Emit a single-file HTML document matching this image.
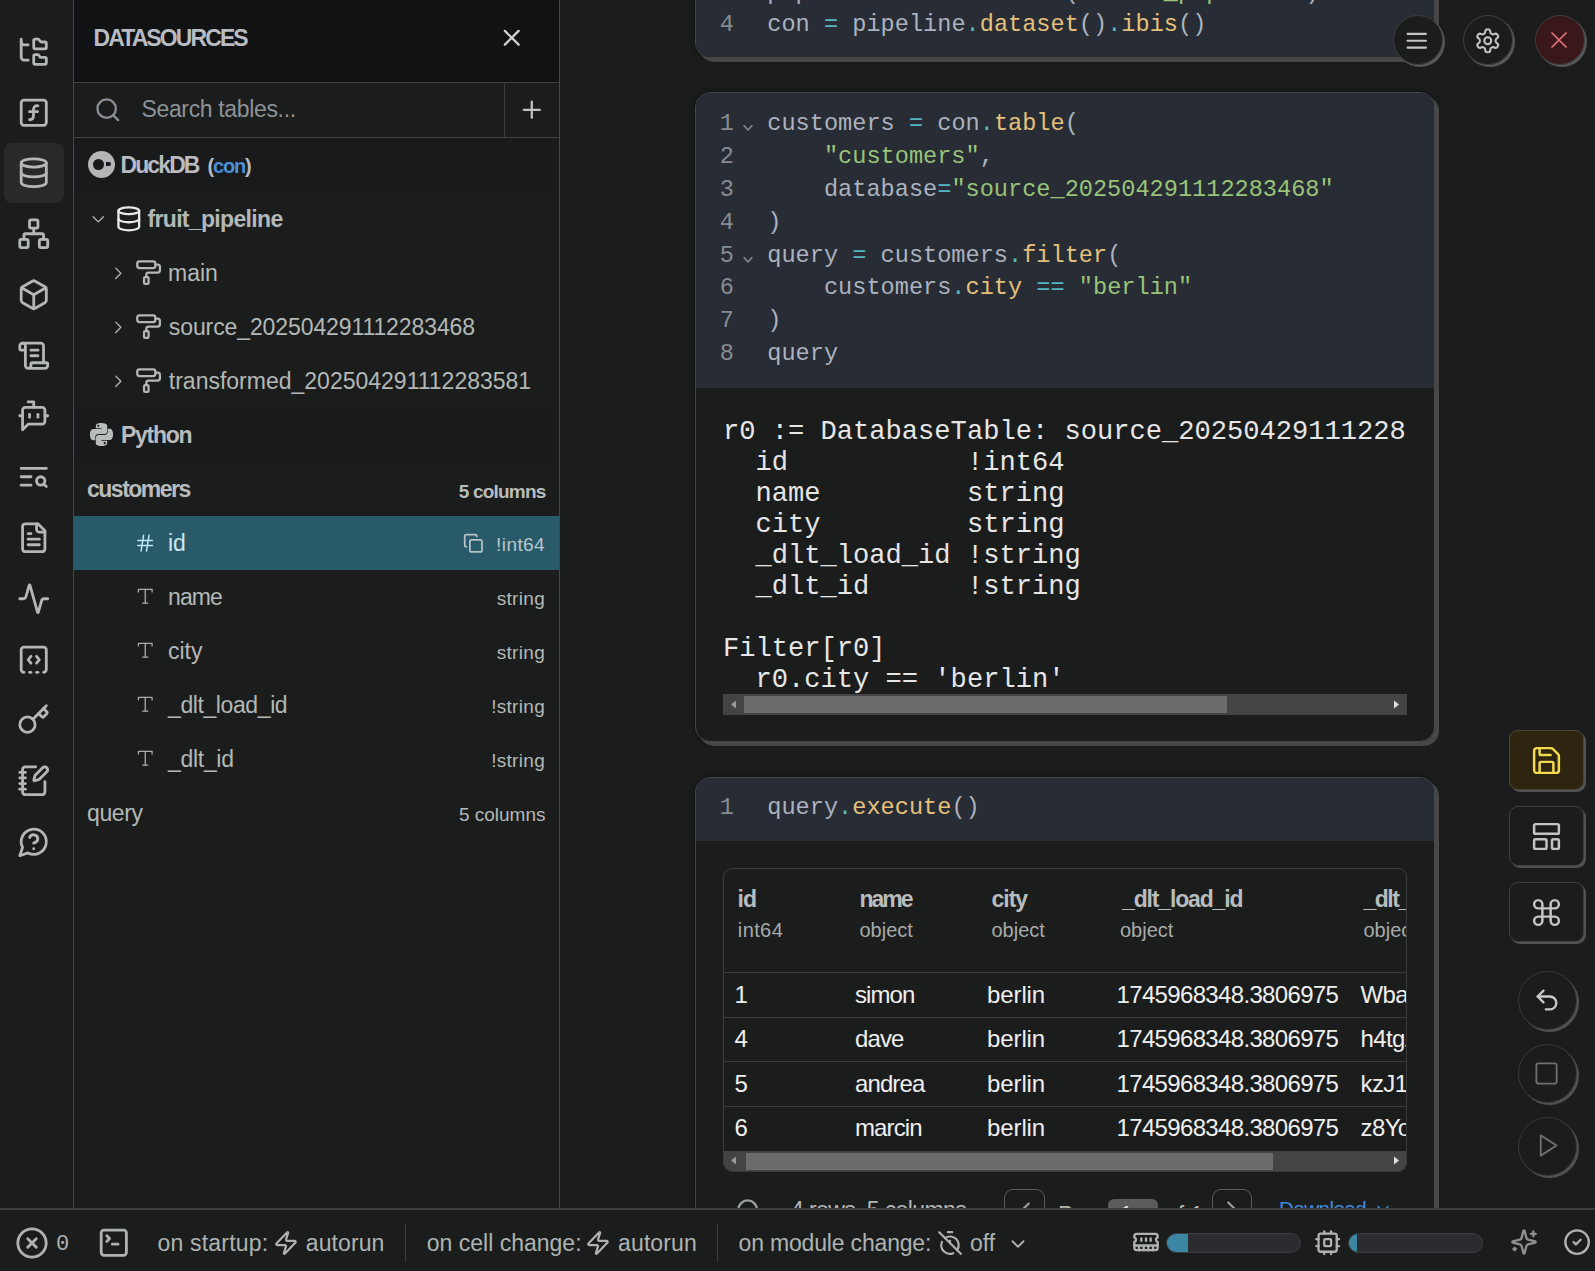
<!DOCTYPE html>
<html><head><meta charset="utf-8">
<style>
*{box-sizing:border-box;margin:0;padding:0}
html,body{width:1595px;height:1271px;overflow:hidden;background:#1b1d1d;font-family:"Liberation Sans",sans-serif;color:#b3b8b6}
.a{position:absolute}
.t{position:absolute;white-space:pre;line-height:1}
.m{font-family:"Liberation Mono",monospace}
svg.i{position:absolute;fill:none;stroke:currentColor;stroke-linecap:round;stroke-linejoin:round;overflow:visible}
.ln{color:#868b91}
.id{color:#abb2bf}
.op{color:#56b6c2}
.fn{color:#e5c07b}
.st{color:#98c379}
</style></head><body>
<div class="a" style="left:0;top:0;width:73px;height:1209px;background:#1b1d1d"></div><div class="a" style="left:73px;top:0;width:1px;height:1209px;background:#43474b"></div><div class="a" style="left:4px;top:143px;width:60px;height:60px;border-radius:8px;background:#282a2a"></div><svg class="i" style="left:17.25px;top:34.85px;width:33.5px;height:33.5px;color:#b3b8b6;stroke-width:2;" viewBox="0 0 24 24"><path d="M20 10a1 1 0 0 0 1-1V6a1 1 0 0 0-1-1h-2.5a1 1 0 0 1-.8-.4l-.9-1.2A1 1 0 0 0 15 3h-2a1 1 0 0 0-1 1v5a1 1 0 0 0 1 1Z"/><path d="M20 21a1 1 0 0 0 1-1v-3a1 1 0 0 0-1-1h-2.9a1 1 0 0 1-.88-.55l-.42-.85a1 1 0 0 0-.92-.6H13a1 1 0 0 0-1 1v5a1 1 0 0 0 1 1Z"/><path d="M3 5a2 2 0 0 0 2 2h3"/><path d="M3 3v13a2 2 0 0 0 2 2h3"/></svg><svg class="i" style="left:17.25px;top:95.62px;width:33.5px;height:33.5px;color:#b3b8b6;stroke-width:2;" viewBox="0 0 24 24"><rect width="18" height="18" x="3" y="3" rx="2"/><path d="M9 17c2 0 2.8-1 2.8-2.8V10c0-2 1-3.3 3.2-3"/><path d="M9 11.2h5.7"/></svg><svg class="i" style="left:17.25px;top:156.39px;width:33.5px;height:33.5px;color:#b3b8b6;stroke-width:2;" viewBox="0 0 24 24"><ellipse cx="12" cy="5" rx="9" ry="3"/><path d="M3 5V19A9 3 0 0 0 21 19V5"/><path d="M3 12A9 3 0 0 0 21 12"/></svg><svg class="i" style="left:17.25px;top:217.16px;width:33.5px;height:33.5px;color:#b3b8b6;stroke-width:2;" viewBox="0 0 24 24"><rect x="16" y="16" width="6" height="6" rx="1"/><rect x="2" y="16" width="6" height="6" rx="1"/><rect x="9" y="2" width="6" height="6" rx="1"/><path d="M5 16v-3a1 1 0 0 1 1-1h12a1 1 0 0 1 1 1v3"/><path d="M12 12V8"/></svg><svg class="i" style="left:17.25px;top:277.93px;width:33.5px;height:33.5px;color:#b3b8b6;stroke-width:2;" viewBox="0 0 24 24"><path d="M21 8a2 2 0 0 0-1-1.73l-7-4a2 2 0 0 0-2 0l-7 4A2 2 0 0 0 3 8v8a2 2 0 0 0 1 1.73l7 4a2 2 0 0 0 2 0l7-4A2 2 0 0 0 21 16Z"/><path d="m3.3 7 8.7 5 8.7-5"/><path d="M12 22V12"/></svg><svg class="i" style="left:17.25px;top:338.70px;width:33.5px;height:33.5px;color:#b3b8b6;stroke-width:2;" viewBox="0 0 24 24"><path d="M15 12h-5"/><path d="M15 8h-5"/><path d="M19 17V5a2 2 0 0 0-2-2H4"/><path d="M8 21h12a2 2 0 0 0 2-2v-1a1 1 0 0 0-1-1H11a1 1 0 0 0-1 1v1a2 2 0 1 1-4 0V5a2 2 0 1 0-4 0v2a1 1 0 0 0 1 1h3"/></svg><svg class="i" style="left:17.25px;top:399.47px;width:33.5px;height:33.5px;color:#b3b8b6;stroke-width:2;" viewBox="0 0 24 24"><path d="M12 6V2H8"/><path d="m8 18-4 4V8a2 2 0 0 1 2-2h12a2 2 0 0 1 2 2v8a2 2 0 0 1-2 2Z"/><path d="M2 12h2"/><path d="M9 11v2"/><path d="M15 11v2"/><path d="M20 12h2"/></svg><svg class="i" style="left:17.25px;top:460.24px;width:33.5px;height:33.5px;color:#b3b8b6;stroke-width:2;" viewBox="0 0 24 24"><path d="M21 6H3"/><path d="M10 12H3"/><path d="M10 18H3"/><circle cx="17" cy="15" r="3"/><path d="m21 19-1.9-1.9"/></svg><svg class="i" style="left:17.25px;top:521.01px;width:33.5px;height:33.5px;color:#b3b8b6;stroke-width:2;" viewBox="0 0 24 24"><path d="M15 2H6a2 2 0 0 0-2 2v16a2 2 0 0 0 2 2h12a2 2 0 0 0 2-2V7Z"/><path d="M14 2v4a2 2 0 0 0 2 2h4"/><path d="M10 9H8"/><path d="M16 13H8"/><path d="M16 17H8"/></svg><svg class="i" style="left:17.25px;top:581.78px;width:33.5px;height:33.5px;color:#b3b8b6;stroke-width:2;" viewBox="0 0 24 24"><path d="M22 12h-2.48a2 2 0 0 0-1.93 1.46l-2.35 8.36a.25.25 0 0 1-.48 0L9.24 2.18a.25.25 0 0 0-.48 0l-2.35 8.36A2 2 0 0 1 4.49 12H2"/></svg><svg class="i" style="left:17.25px;top:642.55px;width:33.5px;height:33.5px;color:#b3b8b6;stroke-width:2;" viewBox="0 0 24 24"><path d="M10 9.5 8 12l2 2.5"/><path d="M14 21h1"/><path d="m14 9.5 2 2.5-2 2.5"/><path d="M5 21a2 2 0 0 1-2-2V5a2 2 0 0 1 2-2h14a2 2 0 0 1 2 2v14a2 2 0 0 1-2 2"/><path d="M9 21h1"/></svg><svg class="i" style="left:17.25px;top:703.32px;width:33.5px;height:33.5px;color:#b3b8b6;stroke-width:2;" viewBox="0 0 24 24"><path d="m15.5 7.5 2.3 2.3a1 1 0 0 0 1.4 0l2.1-2.1a1 1 0 0 0 0-1.4L19 4"/><path d="m21 2-9.6 9.6"/><circle cx="7.5" cy="15.5" r="5.5"/></svg><svg class="i" style="left:17.25px;top:764.09px;width:33.5px;height:33.5px;color:#b3b8b6;stroke-width:2;" viewBox="0 0 24 24"><path d="M13.4 2H6a2 2 0 0 0-2 2v16a2 2 0 0 0 2 2h12a2 2 0 0 0 2-2v-7.4"/><path d="M2 6h4"/><path d="M2 10h4"/><path d="M2 14h4"/><path d="M2 18h4"/><path d="M21.378 5.626a1 1 0 1 0-3.004-3.004l-5.01 5.012a2 2 0 0 0-.506.854l-.837 2.87a.5.5 0 0 0 .62.62l2.87-.837a2 2 0 0 0 .854-.506z"/></svg><svg class="i" style="left:17.25px;top:824.86px;width:33.5px;height:33.5px;color:#b3b8b6;stroke-width:2;" viewBox="0 0 24 24"><path d="M7.9 20A9 9 0 1 0 4 16.1L2 22Z"/><path d="M9.09 9a3 3 0 0 1 5.83 1c0 2-3 3-3 3"/><path d="M12 17h.01"/></svg><div class="a" style="left:74px;top:0;width:485px;height:82px;background:#111214"></div><div class="a" style="left:74px;top:82px;width:485px;height:1px;background:#3f4241"></div><div class="a" style="left:74px;top:137px;width:485px;height:1px;background:#3f4241"></div><div class="a" style="left:504px;top:83px;width:1px;height:54px;background:#3a3d3f"></div><div class="a" style="left:74px;top:138px;width:485px;height:54px;background:#191a1c"></div><div class="a" style="left:74px;top:408px;width:485px;height:54px;background:#191a1c"></div><div class="a" style="left:74px;top:516px;width:485px;height:54px;background:#285a69"></div><div class="a" style="left:559px;top:0;width:1px;height:1209px;background:#43474b"></div><div class="t" style="top:26.63px;font-size:23px;color:#b8bcc2;font-weight:700;letter-spacing:-1.9px;left:93.50px;">DATASOURCES</div><svg class="i" style="left:497.75px;top:23.75px;width:27.5px;height:27.5px;color:#d0d2d4;stroke-width:2;" viewBox="0 0 24 24"><path d="M18 6 6 18"/><path d="m6 6 12 12"/></svg><svg class="i" style="left:93.70px;top:95.70px;width:27.6px;height:27.6px;color:#8a8f94;stroke-width:2;" viewBox="0 0 24 24"><circle cx="11" cy="11" r="8"/><path d="m21 21-4.3-4.3"/></svg><div class="t" style="top:98.43px;font-size:23px;color:#8d9297;letter-spacing:-0.35px;left:141.50px;">Search tables...</div><svg class="i" style="left:517.90px;top:95.70px;width:27.6px;height:27.6px;color:#c0c3c5;stroke-width:2;" viewBox="0 0 24 24"><path d="M5 12h14"/><path d="M12 5v14"/></svg><div class="a" style="left:88px;top:151px;width:27px;height:27px;border-radius:50%;background:#b5b5b5"></div><div class="a" style="left:93.2px;top:158.9px;width:10.8px;height:10.8px;border-radius:50%;background:#191a1c"></div><div class="a" style="left:106.2px;top:162.4px;width:4.6px;height:4.1px;background:#191a1c;border-radius:0 2.3px 2.3px 0"></div><div class="t" style="top:153.63px;font-size:23px;color:#b8bcc0;font-weight:700;letter-spacing:-1.9px;left:120.50px;">DuckDB</div><div class="t" style="top:156.17px;font-size:20px;color:#b8bcc0;font-weight:700;letter-spacing:-1.2px;left:207.50px;">(<span style="color:#4a90d9">con</span>)</div><svg class="i" style="left:87.90px;top:208.90px;width:20.6px;height:20.6px;color:#b3b8b6;stroke-width:1.5;" viewBox="0 0 24 24"><path d="m6 9 6 6 6-6"/></svg><svg class="i" style="left:114.70px;top:204.80px;width:27.6px;height:27.6px;color:#e8e8e8;stroke-width:2;" viewBox="0 0 24 24"><ellipse cx="12" cy="5" rx="9" ry="3"/><path d="M3 5V19A9 3 0 0 0 21 19V5"/><path d="M3 12A9 3 0 0 0 21 12"/></svg><div class="t" style="top:207.73px;font-size:23px;color:#b3b8b6;font-weight:700;letter-spacing:-0.67px;left:147.50px;">fruit_pipeline</div><svg class="i" style="left:107.90px;top:262.70px;width:20.6px;height:20.6px;color:#b3b8b6;stroke-width:1.5;" viewBox="0 0 24 24"><path d="m9 18 6-6-6-6"/></svg><svg class="i" style="left:134.90px;top:259.00px;width:27.2px;height:27.2px;color:#b3b8b6;stroke-width:2;" viewBox="0 0 24 24"><rect width="16" height="6" x="2" y="2" rx="2"/><path d="M10 16v-2a2 2 0 0 1 2-2h8a2 2 0 0 0 2-2V7a2 2 0 0 0-2-2h-2"/><rect width="4" height="6" x="8" y="16" rx="1"/></svg><div class="t" style="top:261.53px;font-size:23px;color:#b3b8b6;left:168.00px;">main</div><svg class="i" style="left:107.90px;top:316.70px;width:20.6px;height:20.6px;color:#b3b8b6;stroke-width:1.5;" viewBox="0 0 24 24"><path d="m9 18 6-6-6-6"/></svg><svg class="i" style="left:134.90px;top:313.00px;width:27.2px;height:27.2px;color:#b3b8b6;stroke-width:2;" viewBox="0 0 24 24"><rect width="16" height="6" x="2" y="2" rx="2"/><path d="M10 16v-2a2 2 0 0 1 2-2h8a2 2 0 0 0 2-2V7a2 2 0 0 0-2-2h-2"/><rect width="4" height="6" x="8" y="16" rx="1"/></svg><div class="t" style="top:315.53px;font-size:23px;color:#b3b8b6;letter-spacing:-0.1px;left:168.80px;">source_202504291112283468</div><svg class="i" style="left:107.90px;top:370.70px;width:20.6px;height:20.6px;color:#b3b8b6;stroke-width:1.5;" viewBox="0 0 24 24"><path d="m9 18 6-6-6-6"/></svg><svg class="i" style="left:134.90px;top:367.00px;width:27.2px;height:27.2px;color:#b3b8b6;stroke-width:2;" viewBox="0 0 24 24"><rect width="16" height="6" x="2" y="2" rx="2"/><path d="M10 16v-2a2 2 0 0 1 2-2h8a2 2 0 0 0 2-2V7a2 2 0 0 0-2-2h-2"/><rect width="4" height="6" x="8" y="16" rx="1"/></svg><div class="t" style="top:369.53px;font-size:23px;color:#b3b8b6;left:168.80px;">transformed_202504291112283581</div><svg class="a" style="left:89px;top:421.5px;width:25px;height:25px" viewBox="0 0 24 24"><path fill="#b8bcbc" d="M11.9 1C6.3 1 6.6 3.4 6.6 3.4v2.5h5.4v.8H4.5S.9 6.3.9 12s3.2 5.5 3.2 5.5H6v-2.7s-.1-3.2 3.1-3.2h5.4s3 .1 3-2.9V3.9S18 1 11.9 1zM8.9 2.7a1 1 0 1 1 0 2 1 1 0 0 1 0-2z"/><path fill="#b8bcbc" d="M12.1 23c5.6 0 5.3-2.4 5.3-2.4v-2.5H12v-.8h7.5s3.6.4 3.6-5.3-3.2-5.5-3.2-5.5H18v2.7s.1 3.2-3.1 3.2H9.5s-3-.1-3 2.9v4.8S6 23 12.1 23zm3-1.7a1 1 0 1 1 0-2 1 1 0 0 1 0 2z"/></svg><div class="t" style="top:423.73px;font-size:23px;color:#b8bcbc;font-weight:700;letter-spacing:-1.3px;left:121.00px;">Python</div><div class="t" style="top:477.53px;font-size:23px;color:#b8bcbc;font-weight:700;letter-spacing:-1.5px;left:87.00px;">customers</div><div class="t" style="top:481.92px;font-size:19px;color:#b8bcbc;font-weight:700;letter-spacing:-0.8px;right:1049.50px;">5 columns</div><svg class="i" style="left:0;top:0;width:1595px;height:1271px;color:#bfeaf5;stroke-width:1.5" viewBox="0 0 1595 1271"><path d="M137.8 540.6H152.5M137.8 545.6H152.5M143.6 535.2 141.1 551M149 535.2 146.5 551"/></svg><div class="t" style="top:531.53px;font-size:23px;color:#cfe8f0;left:168.00px;">id</div><svg class="i" style="left:462.85px;top:532.65px;width:20.7px;height:20.7px;color:#b6c4c8;stroke-width:2;" viewBox="0 0 24 24"><rect width="14" height="14" x="8" y="8" rx="2" ry="2"/><path d="M4 16c-1.1 0-2-.9-2-2V4c0-1.1.9-2 2-2h10c1.1 0 2 .9 2 2"/></svg><div class="t" style="top:534.92px;font-size:19px;color:#b9c7cb;letter-spacing:0.4px;right:1050.00px;">!int64</div><svg class="i" style="left:134.95px;top:586.25px;width:20.5px;height:20.5px;color:#a9aeac;stroke-width:1.5;" viewBox="0 0 24 24"><path d="M4 7V4h16v3"/><path d="M9 20h6"/><path d="M12 4v16"/></svg><div class="t" style="top:585.53px;font-size:23px;color:#b3b8b6;letter-spacing:-0.9px;left:168.00px;">name</div><div class="t" style="top:588.92px;font-size:19px;color:#b3b8b6;letter-spacing:0.3px;right:1050.00px;">string</div><svg class="i" style="left:134.95px;top:640.25px;width:20.5px;height:20.5px;color:#a9aeac;stroke-width:1.5;" viewBox="0 0 24 24"><path d="M4 7V4h16v3"/><path d="M9 20h6"/><path d="M12 4v16"/></svg><div class="t" style="top:639.53px;font-size:23px;color:#b3b8b6;left:168.00px;">city</div><div class="t" style="top:642.92px;font-size:19px;color:#b3b8b6;letter-spacing:0.3px;right:1050.00px;">string</div><svg class="i" style="left:134.95px;top:694.25px;width:20.5px;height:20.5px;color:#a9aeac;stroke-width:1.5;" viewBox="0 0 24 24"><path d="M4 7V4h16v3"/><path d="M9 20h6"/><path d="M12 4v16"/></svg><div class="t" style="top:693.53px;font-size:23px;color:#b3b8b6;letter-spacing:-0.4px;left:168.00px;">_dlt_load_id</div><div class="t" style="top:696.92px;font-size:19px;color:#b3b8b6;letter-spacing:0.3px;right:1050.00px;">!string</div><svg class="i" style="left:134.95px;top:748.25px;width:20.5px;height:20.5px;color:#a9aeac;stroke-width:1.5;" viewBox="0 0 24 24"><path d="M4 7V4h16v3"/><path d="M9 20h6"/><path d="M12 4v16"/></svg><div class="t" style="top:747.53px;font-size:23px;color:#b3b8b6;letter-spacing:-0.3px;left:168.00px;">_dlt_id</div><div class="t" style="top:750.92px;font-size:19px;color:#b3b8b6;letter-spacing:0.3px;right:1050.00px;">!string</div><div class="t" style="top:801.53px;font-size:23px;color:#b3b8b6;letter-spacing:-0.4px;left:87.00px;">query</div><div class="t" style="top:804.92px;font-size:19px;color:#b3b8b6;right:1049.50px;">5 columns</div><div class="a" style="left:695px;top:-300px;width:740px;height:358px;border:1px solid #444746;border-radius:15px;box-shadow:4px 4px 0 0 #464746,0 0 4px 1px rgba(0,0,0,0.35);overflow:hidden;background:#1b1d1d"><div class="a" style="left:0;top:0;width:738px;height:357px;background:#282c34;border-bottom:1px solid #2f2e2c"></div></div><div class="a" style="left:695px;top:92px;width:740px;height:650px;border:1px solid #444746;border-radius:15px;box-shadow:4px 4px 0 0 #464746,0 0 4px 1px rgba(0,0,0,0.35);overflow:hidden;background:#1b1d1d"><div class="a" style="left:0;top:0;width:738px;height:295px;background:#282c34;border-bottom:1px solid #2f2e2c"></div></div><div class="a" style="left:695px;top:777px;width:740px;height:600px;border:1px solid #444746;border-radius:15px;box-shadow:4px 4px 0 0 #464746,0 0 4px 1px rgba(0,0,0,0.35);overflow:hidden;background:#1b1d1d"><div class="a" style="left:0;top:0;width:738px;height:63px;background:#282c34;border-bottom:1px solid #2f2e2c"></div></div><div class="t m" style="top:-19.39px;font-size:23.6px;color:#868b91;right:861.00px;">3</div><div class="t m" style="top:-19.39px;font-size:23.6px;color:#abb2bf;left:767.30px;">pipeline <span class="op">=</span> dlt<span class="op">.</span><span class="fn">attach</span>(<span class="st">"fruit_pipeline"</span>)</div><div class="t m" style="top:13.41px;font-size:23.6px;color:#868b91;right:861.00px;">4</div><div class="t m" style="top:13.41px;font-size:23.6px;color:#abb2bf;left:767.30px;">con <span class="op">=</span> pipeline<span class="op">.</span><span class="fn">dataset</span>()<span class="op">.</span><span class="fn">ibis</span>()</div><div class="t m" style="top:112.21px;font-size:23.6px;color:#868b91;right:861.00px;">1</div><div class="t m" style="top:112.21px;font-size:23.6px;color:#abb2bf;left:767.30px;">customers <span class="op">=</span> con<span class="op">.</span><span class="fn">table</span>(</div><svg class="i" style="left:742px;top:124.30000000000001px;width:12px;height:8px;color:#8a8f94;stroke-width:1.4" viewBox="0 0 12 8"><path d="M2 1.5 6 6l4-4.5"/></svg><div class="t m" style="top:145.06px;font-size:23.6px;color:#868b91;right:861.00px;">2</div><div class="t m" style="top:145.06px;font-size:23.6px;color:#abb2bf;left:767.30px;">    <span class="st">"customers"</span>,</div><div class="t m" style="top:177.91px;font-size:23.6px;color:#868b91;right:861.00px;">3</div><div class="t m" style="top:177.91px;font-size:23.6px;color:#abb2bf;left:767.30px;">    database<span class="op">=</span><span class="st">"source_202504291112283468"</span></div><div class="t m" style="top:210.76px;font-size:23.6px;color:#868b91;right:861.00px;">4</div><div class="t m" style="top:210.76px;font-size:23.6px;color:#abb2bf;left:767.30px;">)</div><div class="t m" style="top:243.61px;font-size:23.6px;color:#868b91;right:861.00px;">5</div><div class="t m" style="top:243.61px;font-size:23.6px;color:#abb2bf;left:767.30px;">query <span class="op">=</span> customers<span class="op">.</span><span class="fn">filter</span>(</div><svg class="i" style="left:742px;top:255.70000000000005px;width:12px;height:8px;color:#8a8f94;stroke-width:1.4" viewBox="0 0 12 8"><path d="M2 1.5 6 6l4-4.5"/></svg><div class="t m" style="top:276.46px;font-size:23.6px;color:#868b91;right:861.00px;">6</div><div class="t m" style="top:276.46px;font-size:23.6px;color:#abb2bf;left:767.30px;">    customers<span class="op">.</span><span class="fn">city</span> <span class="op">==</span> <span class="st">"berlin"</span></div><div class="t m" style="top:309.31px;font-size:23.6px;color:#868b91;right:861.00px;">7</div><div class="t m" style="top:309.31px;font-size:23.6px;color:#abb2bf;left:767.30px;">)</div><div class="t m" style="top:342.16px;font-size:23.6px;color:#868b91;right:861.00px;">8</div><div class="t m" style="top:342.16px;font-size:23.6px;color:#abb2bf;left:767.30px;">query</div><div class="t m" style="top:418.43px;font-size:27.1px;color:#e6e6e6;left:723.00px;">r0 := DatabaseTable: source_20250429111228</div><div class="t m" style="top:449.43px;font-size:27.1px;color:#e6e6e6;left:723.00px;">  id           !int64</div><div class="t m" style="top:480.43px;font-size:27.1px;color:#e6e6e6;left:723.00px;">  name         string</div><div class="t m" style="top:511.43px;font-size:27.1px;color:#e6e6e6;left:723.00px;">  city         string</div><div class="t m" style="top:542.43px;font-size:27.1px;color:#e6e6e6;left:723.00px;">  _dlt_load_id !string</div><div class="t m" style="top:573.43px;font-size:27.1px;color:#e6e6e6;left:723.00px;">  _dlt_id      !string</div><div class="t m" style="top:635.43px;font-size:27.1px;color:#e6e6e6;left:723.00px;">Filter[r0]</div><div class="t m" style="top:666.43px;font-size:27.1px;color:#e6e6e6;left:723.00px;">  r0.city == &#x27;berlin&#x27;</div><div class="a" style="left:723px;top:694px;width:684px;height:21px;background:#444444"></div><div class="a" style="left:744px;top:696px;width:483px;height:17px;background:#6b6b6b"></div><svg class="a" style="left:729px;top:699px;width:10px;height:11px" viewBox="0 0 10 11"><path d="M7 1.5v8L2 5.5z" fill="#9a9a9a"/></svg><svg class="a" style="left:1391px;top:699px;width:10px;height:11px" viewBox="0 0 10 11"><path d="M3 1.5v8l5-4z" fill="#e0e0e0"/></svg><div class="t m" style="top:796.21px;font-size:23.6px;color:#868b91;right:861.00px;">1</div><div class="t m" style="top:796.21px;font-size:23.6px;color:#abb2bf;left:767.30px;">query<span class="op">.</span><span class="fn">execute</span>()</div><div class="a" style="left:723px;top:868px;width:684px;height:304px;border:1px solid #3a3c3c;border-radius:9px;overflow:hidden;background:#1b1d1d"><div class="a" style="left:0;top:103px;width:684px;height:1px;background:#3a3c3c"></div><div class="a" style="left:0;top:148px;width:684px;height:1px;background:#3a3c3c"></div><div class="a" style="left:0;top:192px;width:684px;height:1px;background:#3a3c3c"></div><div class="a" style="left:0;top:237px;width:684px;height:1px;background:#3a3c3c"></div><div class="a" style="left:0;top:282px;width:684px;height:21px;background:#444444"></div><div class="a" style="left:22px;top:284px;width:527px;height:17px;background:#6b6b6b"></div></div><svg class="a" style="left:729px;top:1155px;width:10px;height:11px" viewBox="0 0 10 11"><path d="M7 1.5v8L2 5.5z" fill="#9a9a9a"/></svg><svg class="a" style="left:1391px;top:1155px;width:10px;height:11px" viewBox="0 0 10 11"><path d="M3 1.5v8l5-4z" fill="#e0e0e0"/></svg><div class="a" style="left:724px;top:869px;width:682px;height:282px;overflow:hidden"><div class="t" style="top:18.53px;font-size:23px;color:#b8bcbc;font-weight:700;letter-spacing:-1px;left:13.50px;">id</div><div class="t" style="top:18.53px;font-size:23px;color:#b8bcbc;font-weight:700;letter-spacing:-2px;left:135.50px;">name</div><div class="t" style="top:18.53px;font-size:23px;color:#b8bcbc;font-weight:700;letter-spacing:-1px;left:267.50px;">city</div><div class="t" style="top:18.53px;font-size:23px;color:#b8bcbc;font-weight:700;letter-spacing:-1.15px;left:398.00px;">_dlt_load_id</div><div class="t" style="top:18.53px;font-size:23px;color:#b8bcbc;font-weight:700;letter-spacing:-1.5px;left:639.50px;">_dlt_id</div><div class="t" style="top:51.07px;font-size:20px;color:#a6aaaa;letter-spacing:0.4px;left:13.80px;">int64</div><div class="t" style="top:51.07px;font-size:20px;color:#a6aaaa;left:135.50px;">object</div><div class="t" style="top:51.07px;font-size:20px;color:#a6aaaa;left:267.50px;">object</div><div class="t" style="top:51.07px;font-size:20px;color:#a6aaaa;left:396.00px;">object</div><div class="t" style="top:51.07px;font-size:20px;color:#a6aaaa;left:639.50px;">object</div><div class="t" style="top:113.58px;font-size:24px;color:#efefef;left:10.50px;">1</div><div class="t" style="top:113.58px;font-size:24px;color:#efefef;letter-spacing:-0.9px;left:131.00px;">simon</div><div class="t" style="top:113.58px;font-size:24px;color:#efefef;letter-spacing:-0.1px;left:263.00px;">berlin</div><div class="t" style="top:113.58px;font-size:24px;color:#efefef;letter-spacing:-0.66px;left:392.50px;">1745968348.3806975</div><div class="t" style="top:113.58px;font-size:24px;color:#efefef;letter-spacing:-0.6px;left:636.50px;">Wbaq3kFlwQ</div><div class="t" style="top:158.13px;font-size:24px;color:#efefef;left:10.50px;">4</div><div class="t" style="top:158.13px;font-size:24px;color:#efefef;letter-spacing:-0.9px;left:131.00px;">dave</div><div class="t" style="top:158.13px;font-size:24px;color:#efefef;letter-spacing:-0.1px;left:263.00px;">berlin</div><div class="t" style="top:158.13px;font-size:24px;color:#efefef;letter-spacing:-0.66px;left:392.50px;">1745968348.3806975</div><div class="t" style="top:158.13px;font-size:24px;color:#efefef;letter-spacing:-0.6px;left:636.50px;">h4tgZ9aLpw</div><div class="t" style="top:202.68px;font-size:24px;color:#efefef;left:10.50px;">5</div><div class="t" style="top:202.68px;font-size:24px;color:#efefef;letter-spacing:-0.9px;left:131.00px;">andrea</div><div class="t" style="top:202.68px;font-size:24px;color:#efefef;letter-spacing:-0.1px;left:263.00px;">berlin</div><div class="t" style="top:202.68px;font-size:24px;color:#efefef;letter-spacing:-0.66px;left:392.50px;">1745968348.3806975</div><div class="t" style="top:202.68px;font-size:24px;color:#efefef;letter-spacing:-0.6px;left:636.50px;">kzJ1cDAvhw</div><div class="t" style="top:247.23px;font-size:24px;color:#efefef;left:10.50px;">6</div><div class="t" style="top:247.23px;font-size:24px;color:#efefef;letter-spacing:-0.9px;left:131.00px;">marcin</div><div class="t" style="top:247.23px;font-size:24px;color:#efefef;letter-spacing:-0.1px;left:263.00px;">berlin</div><div class="t" style="top:247.23px;font-size:24px;color:#efefef;letter-spacing:-0.66px;left:392.50px;">1745968348.3806975</div><div class="t" style="top:247.23px;font-size:24px;color:#efefef;letter-spacing:-0.6px;left:636.50px;">z8YoPqLmnw</div></div><svg class="i" style="left:735.20px;top:1197.20px;width:27.6px;height:27.6px;color:#9aa0a0;stroke-width:2;" viewBox="0 0 24 24"><circle cx="11" cy="11" r="8"/><path d="m21 21-4.3-4.3"/></svg><div class="t" style="top:1198.53px;font-size:23px;color:#b3b8b6;letter-spacing:-0.6px;left:791.00px;">4 rows, 5 columns</div><div class="a" style="left:1004px;top:1189px;width:41px;height:41px;border:1.5px solid #5a5c5c;border-radius:9px"></div><svg class="i" style="left:1010.00px;top:1196.00px;width:30px;height:30px;color:#9aa0a0;stroke-width:1.7;" viewBox="0 0 24 24"><path d="m15 18-6-6 6-6"/></svg><div class="t" style="top:1203.53px;font-size:23px;color:#b3b8b6;left:1058.00px;">Page</div><div class="a" style="left:1108px;top:1199px;width:50px;height:30px;background:#5b5b5b;border-radius:6px"></div><div class="t" style="top:1203.53px;font-size:23px;color:#e0e0e0;left:1120.00px;">1</div><div class="t" style="top:1203.53px;font-size:23px;color:#b3b8b6;left:1165.00px;">of 1</div><div class="a" style="left:1212px;top:1189px;width:40px;height:41px;border:1.5px solid #5a5c5c;border-radius:9px"></div><svg class="i" style="left:1217.00px;top:1195.00px;width:30px;height:30px;color:#9aa0a0;stroke-width:1.7;" viewBox="0 0 24 24"><path d="m9 18 6-6-6-6"/></svg><div class="t" style="top:1198.65px;font-size:20.5px;color:#3f8be0;letter-spacing:-0.5px;left:1279.00px;">Download</div><svg class="i" style="left:1372.50px;top:1199.00px;width:20px;height:20px;color:#3f8be0;stroke-width:1.8;" viewBox="0 0 24 24"><path d="m6 9 6 6 6-6"/></svg><div class="a" style="left:1393.00px;top:15.20px;width:50px;height:50px;border-radius:50%;border:1px solid #3d3f40;box-shadow:2px 2px 0 0 #555858;background:#1b1d1d"></div><svg class="i" style="left:1403.25px;top:26.65px;width:27.5px;height:27.5px;color:#c2c4c6;stroke-width:1.8;" viewBox="0 0 24 24"><path d="M4 12h16"/><path d="M4 6h16"/><path d="M4 18h16"/></svg><div class="a" style="left:1463.30px;top:15.20px;width:50px;height:50px;border-radius:50%;border:1px solid #3d3f40;box-shadow:2px 2px 0 0 #555858;background:#1b1d1d"></div><svg class="i" style="left:1474.25px;top:26.75px;width:27.5px;height:27.5px;color:#c2c4c6;stroke-width:1.8;" viewBox="0 0 24 24"><path d="M12.22 2h-.44a2 2 0 0 0-2 2v.18a2 2 0 0 1-1 1.73l-.43.25a2 2 0 0 1-2 0l-.15-.08a2 2 0 0 0-2.73.73l-.22.38a2 2 0 0 0 .73 2.73l.15.1a2 2 0 0 1 1 1.72v.51a2 2 0 0 1-1 1.74l-.15.09a2 2 0 0 0-.73 2.73l.22.38a2 2 0 0 0 2.73.73l.15-.08a2 2 0 0 1 2 0l.43.25a2 2 0 0 1 1 1.73V20a2 2 0 0 0 2 2h.44a2 2 0 0 0 2-2v-.18a2 2 0 0 1 1-1.73l.43-.25a2 2 0 0 1 2 0l.15.08a2 2 0 0 0 2.73-.73l.22-.39a2 2 0 0 0-.73-2.73l-.15-.08a2 2 0 0 1-1-1.74v-.5a2 2 0 0 1 1-1.74l.15-.09a2 2 0 0 0 .73-2.73l-.22-.38a2 2 0 0 0-2.73-.73l-.15.08a2 2 0 0 1-2 0l-.43-.25a2 2 0 0 1-1-1.73V4a2 2 0 0 0-2-2z"/><circle cx="12" cy="12" r="3"/></svg><div class="a" style="left:1534.50px;top:15.20px;width:50px;height:50px;border-radius:50%;border:1px solid #3d3f40;box-shadow:2px 2px 0 0 #555858;background:#3a171a"></div><svg class="i" style="left:1545.00px;top:26.40px;width:28px;height:28px;color:#e57373;stroke-width:1.5;" viewBox="0 0 24 24"><path d="M18 6 6 18"/><path d="m6 6 12 12"/></svg><div class="a" style="left:1508.5px;top:729.8px;width:75px;height:60px;border-radius:9px;border:1px solid #4a4636;box-shadow:2px 2px 0 0 #515353;background:#2e2510"></div><svg class="i" style="left:1529.50px;top:743.50px;width:33px;height:33px;color:#f2d94e;stroke-width:1.8;" viewBox="0 0 24 24"><path d="M15.2 3a2 2 0 0 1 1.4.6l3.8 3.8a2 2 0 0 1 .6 1.4V19a2 2 0 0 1-2 2H5a2 2 0 0 1-2-2V5a2 2 0 0 1 2-2z"/><path d="M17 21v-7a1 1 0 0 0-1-1H8a1 1 0 0 0-1 1v7"/><path d="M7 3v4a1 1 0 0 0 1 1h7"/></svg><div class="a" style="left:1508.5px;top:805.8px;width:75px;height:60px;border-radius:9px;border:1px solid #3d3f40;box-shadow:2px 2px 0 0 #515353;background:#1b1d1d"></div><svg class="i" style="left:1529.50px;top:819.50px;width:33px;height:33px;color:#c2c4c6;stroke-width:1.8;" viewBox="0 0 24 24"><rect width="18" height="7" x="3" y="3" rx="1"/><rect width="9" height="7" x="3" y="14" rx="1"/><rect width="5" height="7" x="16" y="14" rx="1"/></svg><div class="a" style="left:1508.5px;top:881.7px;width:75px;height:60px;border-radius:9px;border:1px solid #3d3f40;box-shadow:2px 2px 0 0 #515353;background:#1b1d1d"></div><svg class="i" style="left:1529.50px;top:896.30px;width:33px;height:33px;color:#c2c4c6;stroke-width:1.8;" viewBox="0 0 24 24"><path d="M15 6v12a3 3 0 1 0 3-3H6a3 3 0 1 0 3 3V6a3 3 0 1 0-3 3h12a3 3 0 1 0-3-3"/></svg><div class="a" style="left:1517.50px;top:971.30px;width:59px;height:59px;border-radius:50%;border:1px solid #383a3a;box-shadow:2px 2px 0 0 #505252;background:#1b1d1d"></div><svg class="i" style="left:1532.50px;top:986.00px;width:28px;height:28px;color:#c8cacc;stroke-width:2;" viewBox="0 0 24 24"><path d="M9 14 4 9l5-5"/><path d="M4 9h10.5a5.5 5.5 0 0 1 5.5 5.5a5.5 5.5 0 0 1-5.5 5.5H11"/></svg><div class="a" style="left:1517.50px;top:1044.00px;width:59px;height:59px;border-radius:50%;border:1px solid #383a3a;box-shadow:2px 2px 0 0 #505252;background:#1b1d1d"></div><svg class="i" style="left:1532.50px;top:1059.50px;width:27px;height:27px;color:#6d6f70;stroke-width:1.6;" viewBox="0 0 24 24"><rect width="18" height="18" x="3" y="3" rx="2"/></svg><div class="a" style="left:1517.50px;top:1116.50px;width:59px;height:59px;border-radius:50%;border:1px solid #383a3a;box-shadow:2px 2px 0 0 #505252;background:#1b1d1d"></div><svg class="i" style="left:1533.50px;top:1131.50px;width:27px;height:27px;color:#6d6f70;stroke-width:1.6;" viewBox="0 0 24 24"><polygon points="6 3 20 12 6 21 6 3"/></svg><div class="a" style="left:0;top:1208px;width:1595px;height:63px;background:#1b1d1d;border-top:2px solid #393d3d"></div><svg class="i" style="left:14.80px;top:1226.00px;width:34px;height:34px;color:#aeb3b1;stroke-width:2;" viewBox="0 0 24 24"><circle cx="12" cy="12" r="10"/><path d="m15 9-6 6"/><path d="m9 9 6 6"/></svg><div class="t m" style="top:1234.14px;font-size:22px;color:#aeb3b1;left:56.00px;">0</div><svg class="i" style="left:97.30px;top:1226.20px;width:33.6px;height:33.6px;color:#aeb3b1;stroke-width:2;" viewBox="0 0 24 24"><path d="m7 11 2-2-2-2"/><path d="M11 13h4"/><rect width="18" height="18" x="3" y="3" rx="2" ry="2"/></svg><div class="t" style="top:1232.13px;font-size:23px;color:#aeb3b1;letter-spacing:0.2px;left:157.50px;">on startup:</div><svg class="i" style="left:273.40px;top:1230.00px;width:26px;height:26px;color:#aeb3b1;stroke-width:2;" viewBox="0 0 24 24"><path d="M4 14a1 1 0 0 1-.78-1.63l9.9-10.2a.5.5 0 0 1 .86.46l-1.92 6.02A1 1 0 0 0 13 10h7a1 1 0 0 1 .78 1.63l-9.9 10.2a.5.5 0 0 1-.86-.46l1.92-6.02A1 1 0 0 0 11 14z"/></svg><div class="t" style="top:1232.13px;font-size:23px;color:#aeb3b1;letter-spacing:0.1px;left:305.80px;">autorun</div><div class="a" style="left:405px;top:1223px;width:1px;height:39px;background:#3a3d3f"></div><div class="t" style="top:1232.13px;font-size:23px;color:#aeb3b1;left:426.80px;">on cell change:</div><svg class="i" style="left:585.40px;top:1230.00px;width:26px;height:26px;color:#aeb3b1;stroke-width:2;" viewBox="0 0 24 24"><path d="M4 14a1 1 0 0 1-.78-1.63l9.9-10.2a.5.5 0 0 1 .86.46l-1.92 6.02A1 1 0 0 0 13 10h7a1 1 0 0 1 .78 1.63l-9.9 10.2a.5.5 0 0 1-.86-.46l1.92-6.02A1 1 0 0 0 11 14z"/></svg><div class="t" style="top:1232.13px;font-size:23px;color:#aeb3b1;letter-spacing:0.1px;left:618.10px;">autorun</div><div class="a" style="left:717px;top:1223px;width:1px;height:39px;background:#3a3d3f"></div><div class="t" style="top:1232.13px;font-size:23px;color:#aeb3b1;letter-spacing:-0.18px;left:738.60px;">on module change:</div><svg class="i" style="left:937.20px;top:1230.20px;width:26px;height:26px;color:#aeb3b1;stroke-width:2;" viewBox="0 0 24 24"><path d="M10 2h4"/><path d="M4.6 11a8 8 0 0 0 1.7 8.7 8 8 0 0 0 8.7 1.7"/><path d="M7.4 7.4a8 8 0 0 1 10.3 1 8 8 0 0 1 .9 10.2"/><path d="m2 2 20 20"/><path d="M12 12v-2"/></svg><div class="t" style="top:1232.13px;font-size:23px;color:#aeb3b1;left:970.00px;">off</div><svg class="i" style="left:1007.20px;top:1232.60px;width:22px;height:22px;color:#aeb3b1;stroke-width:2;" viewBox="0 0 24 24"><path d="m6 9 6 6 6-6"/></svg><svg class="i" style="left:1131.50px;top:1228.40px;width:28px;height:28px;color:#aeb3b1;stroke-width:2;" viewBox="0 0 24 24"><path d="M6 19v-3"/><path d="M10 19v-3"/><path d="M14 19v-3"/><path d="M18 19v-3"/><path d="M8 11V9"/><path d="M16 11V9"/><path d="M12 11V9"/><path d="M2 15h20"/><path d="M2 7a2 2 0 0 1 2-2h16a2 2 0 0 1 2 2v1.1a2 2 0 0 0 0 3.837V17a2 2 0 0 1-2 2H4a2 2 0 0 1-2-2v-5.1a2 2 0 0 0 0-3.837Z"/></svg><div class="a" style="left:1166px;top:1233px;width:135px;height:20px;border-radius:10px;background:#2a2c30;border:1px solid #3a3c3e;overflow:hidden"><div class="a" style="left:0;top:0;width:21px;height:18px;background:#3b87a3"></div></div><svg class="i" style="left:1313.75px;top:1228.85px;width:27.3px;height:27.3px;color:#aeb3b1;stroke-width:2;" viewBox="0 0 24 24"><rect width="16" height="16" x="4" y="4" rx="2"/><rect width="6" height="6" x="9" y="9" rx="1"/><path d="M15 2v2"/><path d="M15 20v2"/><path d="M2 15h2"/><path d="M2 9h2"/><path d="M20 15h2"/><path d="M20 9h2"/><path d="M9 2v2"/><path d="M9 20v2"/></svg><div class="a" style="left:1348px;top:1233px;width:135px;height:20px;border-radius:10px;background:#2a2c30;border:1px solid #3a3c3e;overflow:hidden"><div class="a" style="left:0;top:0;width:8px;height:18px;background:#3b87a3"></div></div><svg class="i" style="left:1510.00px;top:1228.40px;width:28px;height:28px;color:#8c908f;stroke-width:2;" viewBox="0 0 24 24"><path d="M9.937 15.5A2 2 0 0 0 8.5 14.063l-6.135-1.582a.5.5 0 0 1 0-.962L8.5 9.936A2 2 0 0 0 9.937 8.5l1.582-6.135a.5.5 0 0 1 .963 0L14.063 8.5A2 2 0 0 0 15.5 9.937l6.135 1.581a.5.5 0 0 1 0 .964L15.5 14.063a2 2 0 0 0-1.437 1.437l-1.582 6.135a.5.5 0 0 1-.963 0z"/><path d="M20 3v4"/><path d="M22 5h-4"/><path d="M4 17v2"/><path d="M5 18H3"/></svg><svg class="i" style="left:1563.40px;top:1228.30px;width:28.2px;height:28.2px;color:#aeb3b1;stroke-width:2;" viewBox="0 0 24 24"><circle cx="12" cy="12" r="10"/><path d="m9 12 2 2 4-4"/></svg>
</body></html>
